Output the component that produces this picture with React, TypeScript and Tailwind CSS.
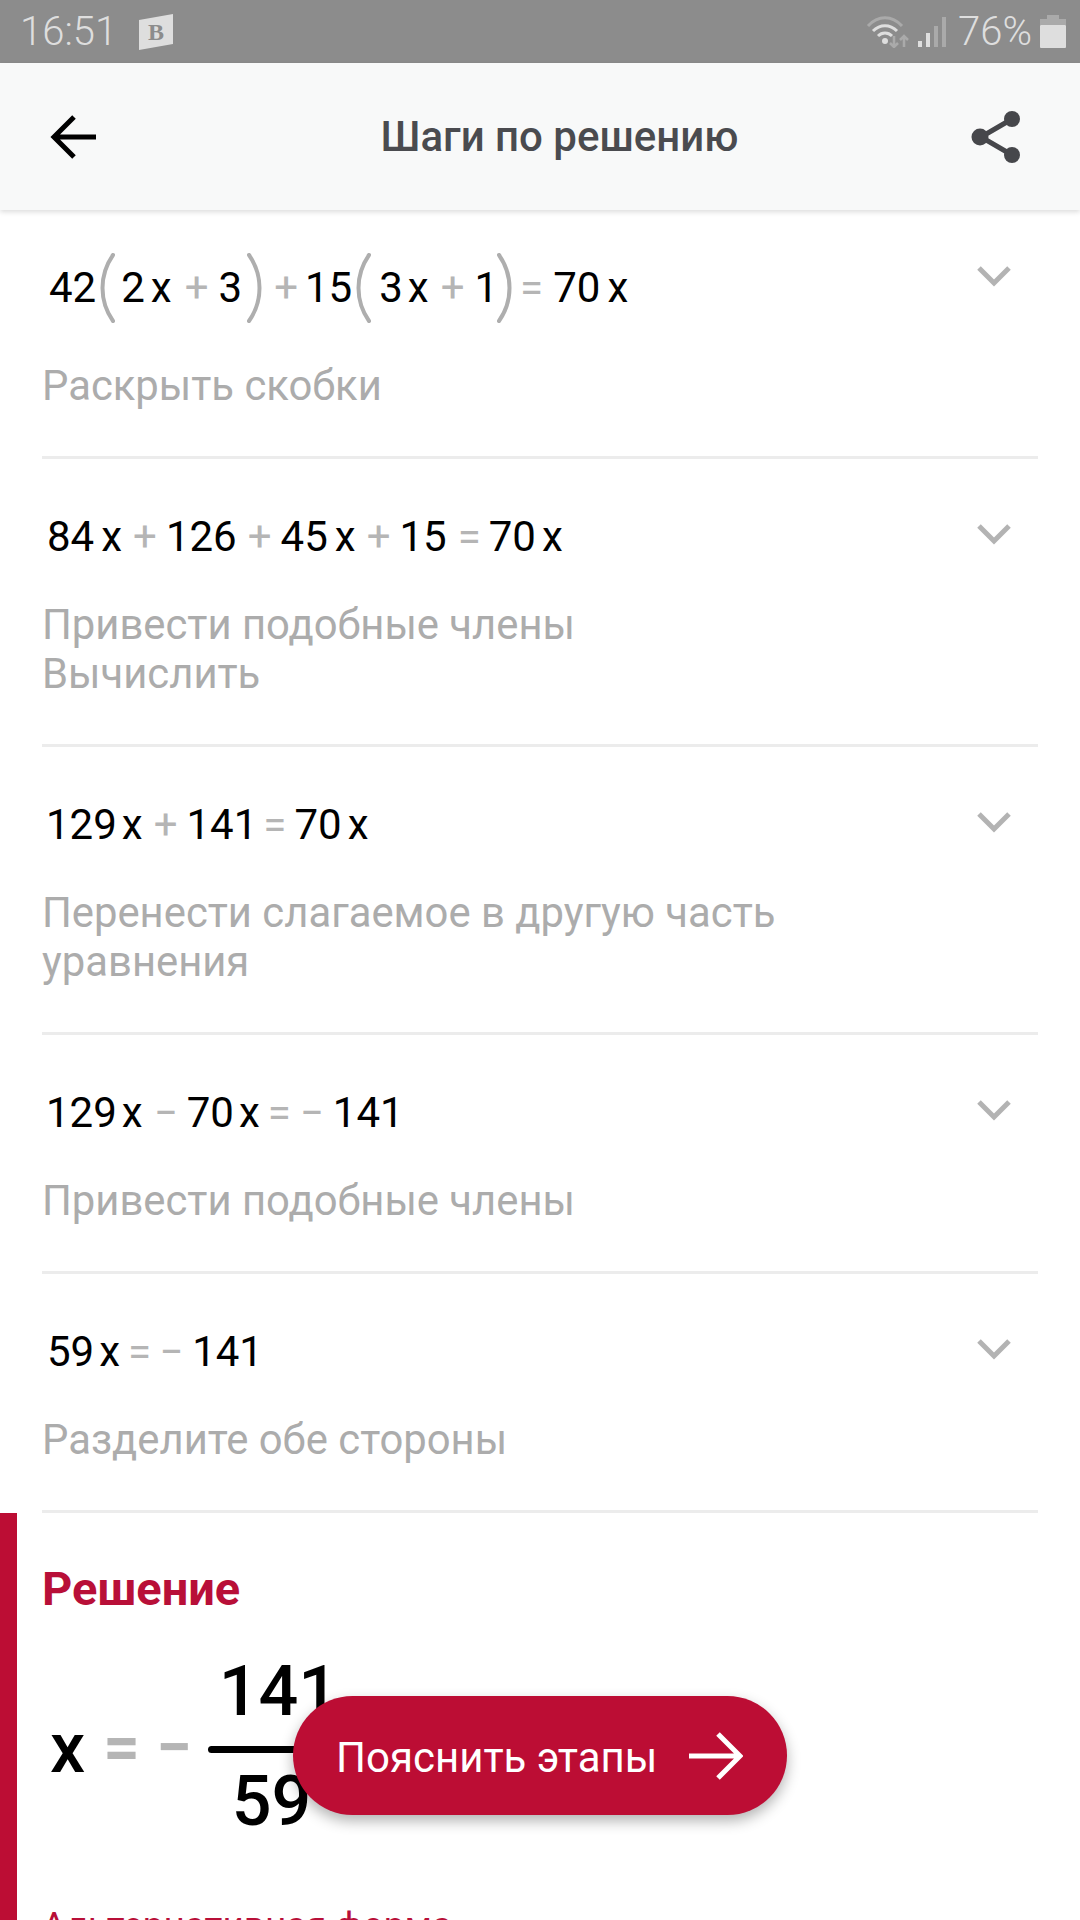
const steps = [
  {
    pad: "pl-[5px]",
    tokens: [
      { t: "84", c: "ml-0" },
      { t: "x", c: "ml-[7px]" },
      { t: "+", c: "ml-[11px] text-[#b5b5b5]" },
      { t: "126", c: "ml-[9px]" },
      { t: "+", c: "ml-[11px] text-[#b5b5b5]" },
      { t: "45", c: "ml-[9px]" },
      { t: "x", c: "ml-[7px]" },
      { t: "+", c: "ml-[11px] text-[#b5b5b5]" },
      { t: "15", c: "ml-[9px]" },
      { t: "=", c: "ml-[11px] text-[#b5b5b5]" },
      { t: "70", c: "ml-[8px]" },
      { t: "x", c: "ml-[6px]" },
    ],
    desc: ["Привести подобные члены", "Вычислить"],
  },
  {
    pad: "pl-[4px]",
    tokens: [
      { t: "129", c: "ml-0" },
      { t: "x", c: "ml-[5px]" },
      { t: "+", c: "ml-[11px] text-[#b5b5b5]" },
      { t: "141", c: "ml-[9px]" },
      { t: "=", c: "ml-[6px] text-[#b5b5b5]" },
      { t: "70", c: "ml-[8px]" },
      { t: "x", c: "ml-[6px]" },
    ],
    desc: ["Перенести слагаемое в другую часть", "уравнения"],
  },
  {
    pad: "pl-[4px]",
    tokens: [
      { t: "129", c: "ml-0" },
      { t: "x", c: "ml-[5px]" },
      { t: "−", c: "ml-[11px] text-[#b5b5b5]" },
      { t: "70", c: "ml-[9px]" },
      { t: "x", c: "ml-[5px]" },
      { t: "=", c: "ml-[8px] text-[#b5b5b5]" },
      { t: "−", c: "ml-[9px] text-[#b5b5b5]" },
      { t: "141", c: "ml-[9px]" },
    ],
    desc: ["Привести подобные члены"],
  },
  {
    pad: "pl-[5px]",
    tokens: [
      { t: "59", c: "ml-0" },
      { t: "x", c: "ml-[5px]" },
      { t: "=", c: "ml-[8px] text-[#b5b5b5]" },
      { t: "−", c: "ml-[8px] text-[#b5b5b5]" },
      { t: "141", c: "ml-[9px]" },
    ],
    desc: ["Разделите обе стороны"],
  },
];

function Chevron({ className }: { className: string }) {
  return (
    <svg width="36" height="22" viewBox="0 0 36 22" className={className}>
      <path d="M3 3 L18 18 L33 3" fill="none" stroke="#b3b3b3" strokeWidth="5" />
    </svg>
  );
}

function Paren({ className }: { className: string }) {
  return (
    <svg width="16" height="70" viewBox="0 0 16 70" className={className}>
      <path d="M14 2 C0 22 0 48 14 68" fill="none" stroke="#aeaeae" strokeWidth="4" strokeLinecap="round" />
    </svg>
  );
}

export default function App() {
  return (
    <div className="relative h-[1920px] w-[1080px] overflow-hidden bg-white font-['Roboto',sans-serif]">
      {/* status bar */}
      <div className="flex h-[63px] items-center justify-between bg-[#8c8c8c] pl-[20px] pr-[14px] text-[40px] text-[#dedede]">
        <div className="flex items-center gap-[21px]">
          <span className="font-light leading-none">16:51</span>
          <svg width="36" height="36" viewBox="0 0 36 36">
            <polygon points="1,6 35,0 35,30 1,36" fill="#dedede" />
            <text x="18" y="26" textAnchor="middle" fontSize="24" fontWeight="700" fill="#8c8c8c" fontFamily="Liberation Serif, serif">
              B
            </text>
          </svg>
        </div>
        <div className="flex items-center">
          <svg width="44" height="32" viewBox="0 0 44 32" className="mr-[8px]">
            <path d="M2 10 C12 -1 26 -1 36 10" fill="none" stroke="#aaaaaa" strokeWidth="3" />
            <path d="M7 15 C14 8 24 8 31 15" fill="none" stroke="#dedede" strokeWidth="3" />
            <path d="M12 20 C16 16 22 16 26 20" fill="none" stroke="#dedede" strokeWidth="3" />
            <circle cx="19" cy="25" r="3" fill="#dedede" />
            <path d="M28 20 V31 M24 27 L28 31 L32 27" fill="none" stroke="#aaaaaa" strokeWidth="2.5" />
            <path d="M38 31 V20 M34 24 L38 20 L42 24" fill="none" stroke="#aaaaaa" strokeWidth="2.5" />
          </svg>
          <svg width="28" height="30" viewBox="0 0 28 30" className="mr-[12px]">
            <rect x="0" y="24" width="4" height="6" fill="#dedede" />
            <rect x="8" y="16" width="4" height="14" fill="#dedede" />
            <rect x="16" y="9" width="4" height="21" fill="#aaaaaa" />
            <rect x="24" y="0" width="4" height="30" fill="#aaaaaa" />
          </svg>
          <span className="font-light leading-none">76%</span>
          <svg width="26" height="33" viewBox="0 0 26 33" className="ml-[8px]">
            <path d="M7 0 H19 V4 H26 V10 H0 V4 H7 Z" fill="#aaaaaa" />
            <rect x="0" y="10" width="26" height="23" rx="1" fill="#dedede" />
          </svg>
        </div>
      </div>

      {/* header */}
      <div className="relative z-10 flex h-[147px] items-center bg-[#f8f9f9] pl-[50px] pr-[59px] shadow-[0_2px_5px_rgba(0,0,0,0.14)]">
        <svg width="46" height="44" viewBox="0 0 46 44">
          <path d="M24 2 L4 22 L24 42 M4 22 H46" fill="none" stroke="#000000" strokeWidth="5" />
        </svg>
        <h1 className="flex-1 pl-[52px] text-center text-[42px] font-medium text-[#4a4b4f]">Шаги по решению</h1>
        <svg width="50" height="54" viewBox="0 0 50 54">
          <path d="M41 9 L10 27 L41 45" fill="none" stroke="#46474b" strokeWidth="5" />
          <circle cx="41" cy="9" r="8" fill="#46474b" />
          <circle cx="9" cy="27" r="8.5" fill="#46474b" />
          <circle cx="41" cy="45" r="8" fill="#46474b" />
        </svg>
      </div>

      {/* steps */}
      <div className="pl-[42px] pr-[42px]">
        <div className="border-b-[3px] border-[#ececec] pb-[46px] pt-[47px]">
          <div className="flex h-[62px] items-center justify-between">
            <div className="flex items-center pl-[7px] text-[42px] leading-none text-black">
              <span>42</span>
              <Paren className="mx-[3px]" />
              <span className="ml-[3px]">2</span>
              <span className="ml-[6px]">x</span>
              <span className="ml-[13px] text-[#b5b5b5]">+</span>
              <span className="ml-[10px]">3</span>
              <Paren className="ml-[5px] mr-[3px] -scale-x-100" />
              <span className="ml-[8px] text-[#b5b5b5]">+</span>
              <span className="ml-[7px]">15</span>
              <Paren className="mx-[3px]" />
              <span className="ml-[5px]">3</span>
              <span className="ml-[5px]">x</span>
              <span className="ml-[12px] text-[#b5b5b5]">+</span>
              <span className="ml-[10px]">1</span>
              <Paren className="-ml-[1px] mr-[3px] -scale-x-100" />
              <span className="ml-[4px] text-[#b5b5b5]">=</span>
              <span className="ml-[10px]">70</span>
              <span className="ml-[7px]">x</span>
            </div>
            <Chevron className="mb-[24px] mr-[26px]" />
          </div>
          <p className="mt-[42px] text-[41.8px] leading-[49px] text-[#acacac]">Раскрыть скобки</p>
        </div>

        {steps.map((step, i) => (
          <div key={i} className="border-b-[3px] border-[#ececec] pb-[46px] pt-[50px]">
            <div className="flex h-[56px] items-center justify-between">
              <div className={`flex items-center text-[42px] leading-none text-black ${step.pad}`}>
                {step.tokens.map((tok, j) => (
                  <span key={j} className={tok.c}>
                    {tok.t}
                  </span>
                ))}
              </div>
              <Chevron className="mb-[6px] mr-[26px]" />
            </div>
            <div className="mt-[35px] text-[41.8px] leading-[49px] text-[#acacac]">
              {step.desc.map((line) => (
                <p key={line}>{line}</p>
              ))}
            </div>
          </div>
        ))}
      </div>

      {/* solution */}
      <div className="border-l-[17px] border-[#bc0d34] pl-[25px]">
        <h2 className="pt-[50px] text-[47px] font-bold leading-[52px] text-[#b80f38]">Решение</h2>
        <div className="mt-[39px] flex items-center pl-[8px] text-black">
          <span className="text-[70px] font-medium leading-none">x</span>
          <span className="ml-[18px] text-[64px] font-bold leading-none text-[#b5b5b5]">=</span>
          <span className="ml-[16px] text-[64px] font-bold leading-none text-[#b5b5b5]">−</span>
          <div className="ml-[17px] flex w-[140px] flex-col items-center">
            <span className="text-[70px] font-medium leading-[74px]">141</span>
            <span className="mb-[11px] mt-[18px] h-[7px] w-full rounded-full bg-black"></span>
            <span className="pb-[4px] pr-[14px] text-[70px] font-medium leading-[74px]">59</span>
          </div>
        </div>
        <p className="mt-[59px] text-[37px] leading-[49px] text-[#b80f38]">Альтернативная форма</p>
      </div>

      {/* floating button */}
      <div className="absolute left-[293px] top-[1696px] flex h-[119px] w-[494px] items-center rounded-full bg-[#bc0d34] pl-[43px] shadow-[0_6px_14px_rgba(0,0,0,0.3)]">
        <span className="pt-[4px] text-[42px] leading-none text-white">Пояснить этапы</span>
        <svg width="56" height="50" viewBox="0 0 56 50" className="ml-[30px]">
          <path d="M2 25 H52 M31 3 L53 25 L31 47" fill="none" stroke="#ffffff" strokeWidth="5" />
        </svg>
      </div>
    </div>
  );
}
